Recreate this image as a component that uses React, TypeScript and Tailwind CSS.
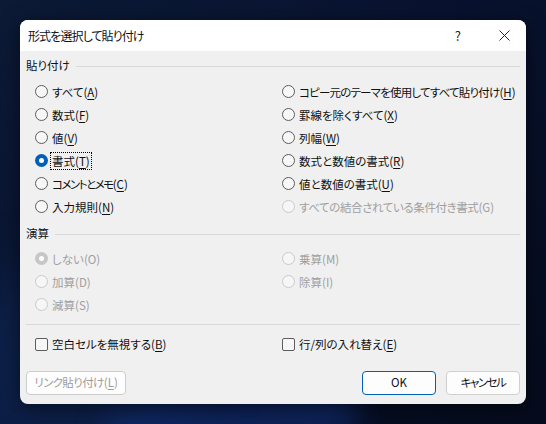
import type React from 'react';

type Opt = {
	label: string;
	key: string;
	checked?: boolean;
	disabled?: boolean;
	focus?: boolean;
	tight?: string;
};

const FONT = "font-['Noto_Sans_CJK_JP','Noto_Sans',sans-serif] [font-feature-settings:'palt']";

function Label({
	label,
	keyChar,
	disabled,
	tight,
}: {
	label: string;
	keyChar: string;
	disabled?: boolean;
	tight?: string;
}) {
	// disabled items show the access key without underline
	return (
		<>
			<span className={tight ?? ''}>{label}</span>(
			<span className={disabled ? '' : 'underline underline-offset-[2px] decoration-[1px]'}>{keyChar}</span>)
		</>
	);
}

function Radio({ opt }: { opt: Opt }) {
	const { checked, disabled } = opt;
	let circle = 'border border-[#5d5d5d] bg-[#f7f7f7]';
	if (disabled) circle = 'border border-[#c9c9c9] bg-[#f6f6f6]';
	if (checked && !disabled) circle = 'bg-[#005fb8]';
	if (checked && disabled) circle = 'bg-[#c6c6c6]';
	return (
		<div className="flex h-[23px] items-center">
			<div className={`flex h-[13px] w-[13px] shrink-0 items-center justify-center rounded-full ${circle}`}>
				{checked && <div className="h-[5px] w-[5px] rounded-full bg-white" />}
			</div>
			<span
				className={`ml-[3px] whitespace-nowrap px-[1px] leading-[16px] ${
					disabled ? 'text-[#9f9f9f]' : 'text-[#111]'
				} ${opt.focus ? 'outline outline-1 outline-dotted outline-black' : ''}`}
			>
				<Label label={opt.label} keyChar={opt.key} disabled={disabled} tight={opt.tight} />
			</span>
		</div>
	);
}

function Check({ label, keyChar }: { label: string; keyChar: string }) {
	return (
		<div className="flex h-[23px] items-center">
			<div className="h-[13px] w-[13px] shrink-0 rounded-[2px] border border-[#5d5d5d] bg-[#f7f7f7]" />
			<span className="ml-[4px] whitespace-nowrap text-[#111]">
				<Label label={label} keyChar={keyChar} />
			</span>
		</div>
	);
}

function Header({ children }: { children: React.ReactNode }) {
	return (
		<div className="flex h-[16px] items-center">
			<span className="text-[#111]">{children}</span>
			<div className="ml-[6px] h-px flex-1 bg-[#d9d9d9]" />
		</div>
	);
}

function Button({
	children,
	className,
}: {
	children: React.ReactNode;
	className?: string;
}) {
	return (
		<div
			className={`flex h-[24px] items-center justify-center whitespace-nowrap rounded-[4px] border bg-[#fdfdfd] ${className ?? ''}`}
		>
			{children}
		</div>
	);
}

const pasteLeft: Opt[] = [
	{ label: 'すべて', key: 'A' },
	{ label: '数式', key: 'F' },
	{ label: '値', key: 'V' },
	{ label: '書式', key: 'T', checked: true, focus: true },
	{ label: 'コメントとメモ', key: 'C', tight: 'tracking-[-1.5px]' },
	{ label: '入力規則', key: 'N' },
];

const pasteRight: Opt[] = [
	{ label: 'コピー元のテーマを使用してすべて貼り付け', key: 'H', tight: 'tracking-[-0.8px]' },
	{ label: '罫線を除くすべて', key: 'X' },
	{ label: '列幅', key: 'W' },
	{ label: '数式と数値の書式', key: 'R' },
	{ label: '値と数値の書式', key: 'U' },
	{ label: 'すべての結合されている条件付き書式', key: 'G', disabled: true, tight: 'tracking-[-0.4px]' },
];

const opLeft: Opt[] = [
	{ label: 'しない', key: 'O', checked: true, disabled: true },
	{ label: '加算', key: 'D', disabled: true },
	{ label: '減算', key: 'S', disabled: true },
];

const opRight: Opt[] = [
	{ label: '乗算', key: 'M', disabled: true },
	{ label: '除算', key: 'I', disabled: true },
];

export default function App() {
	return (
		<div
			className={`relative h-[424px] w-[546px] overflow-hidden bg-[linear-gradient(135deg,#0c1a36_0%,#081330_45%,#050b1c_100%)] pl-[20px] pt-[20px] text-[11.5px] ${FONT}`}
		>
			{/* wallpaper streaks */}
			<div className="absolute -left-[60px] top-[270px] h-[200px] w-[260px] rounded-full bg-[#0f2552] opacity-70 blur-[30px]" />
			<div className="absolute left-[100px] top-[395px] h-[60px] w-[260px] rotate-[-8deg] rounded-full bg-[#12307a] opacity-60 blur-[14px]" />

			{/* dialog */}
			<div className="relative flex h-[384px] w-[506px] flex-col overflow-hidden rounded-[8px] bg-[#f0f0f0] shadow-[0_4px_20px_rgba(0,0,0,0.5)]">
				{/* title bar */}
				<div className="flex h-[31px] shrink-0 items-center bg-white pl-[8px] pr-[12px]">
					<span className="text-[12px] tracking-[-0.9px] text-[#111]">形式を選択して貼り付け</span>
					<span className="ml-auto mr-[38px] text-[13px] text-[#222]">?</span>
					<svg width="11" height="11" viewBox="0 0 11 11" className="mr-[4px]">
						<path d="M0.5 0.5 L10.5 10.5 M10.5 0.5 L0.5 10.5" stroke="#222" strokeWidth="1" />
					</svg>
				</div>

				{/* body */}
				<div className="flex flex-1 flex-col px-[6px] pt-[7px]">
					<Header>貼り付け</Header>
					<div className="mt-[6px] grid grid-cols-[247px_1fr] pl-[9px]">
						<div className="flex flex-col">
							{pasteLeft.map((o) => (
								<Radio key={o.key} opt={o} />
							))}
						</div>
						<div className="flex flex-col">
							{pasteRight.map((o) => (
								<Radio key={o.key} opt={o} />
							))}
						</div>
					</div>

					<div className="mt-[8px]">
						<Header>演算</Header>
					</div>
					<div className="mt-[5px] grid grid-cols-[247px_1fr] pl-[9px]">
						<div className="flex flex-col">
							{opLeft.map((o) => (
								<Radio key={o.key} opt={o} />
							))}
						</div>
						<div className="flex flex-col">
							{opRight.map((o) => (
								<Radio key={o.key} opt={o} />
							))}
						</div>
					</div>

					<div className="mt-[8px] h-px bg-[#d9d9d9]" />

					<div className="mt-[8px] grid grid-cols-[247px_1fr] pl-[9px]">
						<Check label="空白セルを無視する" keyChar="B" />
						<Check label="行/列の入れ替え" keyChar="E" />
					</div>

					<div className="mt-[15px] flex items-center">
						<Button className="w-[100px] border-[#cccccc] text-[#9d9d9d]">
							<span className="tracking-[-0.6px]">リンク貼り付け</span>(
							<span className="underline underline-offset-[2px]">L</span>)
						</Button>
						<Button className="ml-auto w-[74px] border-[#005fb8] text-[#111]">OK</Button>
						<Button className="ml-[10px] w-[74px] border-[#d0d0d0] tracking-[-1.5px] text-[#111]">
							キャンセル
						</Button>
					</div>
				</div>
			</div>
		</div>
	);
}
